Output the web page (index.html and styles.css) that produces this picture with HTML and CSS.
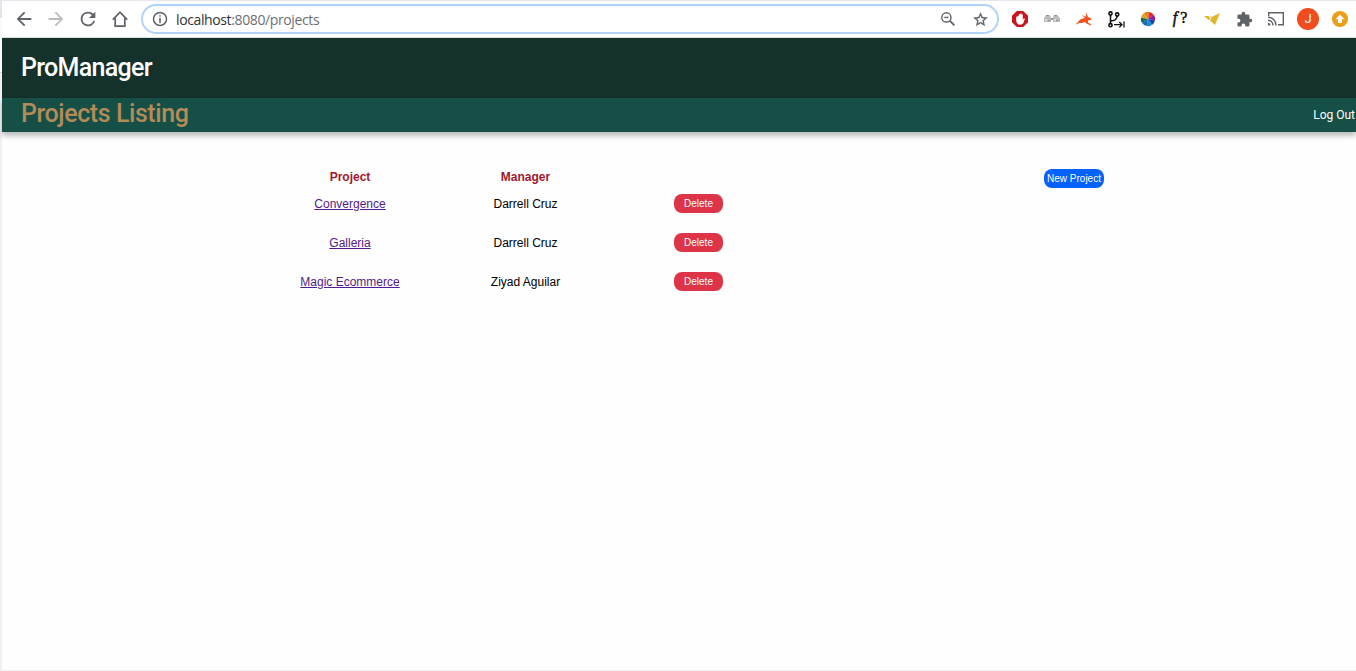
FILE: index.html
```html
<!DOCTYPE html>
<html lang="en">
<head>
<meta charset="utf-8">
<title>ProManager</title>
<link rel="stylesheet" href="styles.css">
</head>
<body>
<div class="window">
  <div class="toolbar">
    <span class="cell"><svg width="22" height="22" viewBox="0 0 24 24"><path fill="#5f6368" d="M20 11H7.83l5.59-5.59L12 4l-8 8 8 8 1.41-1.41L7.83 13H20z"/></svg></span>
    <span class="cell"><svg width="22" height="22" viewBox="0 0 24 24"><path fill="#babcbe" d="M12 4l-1.41 1.41L16.17 11H4v2h12.17l-5.58 5.59L12 20l8-8z"/></svg></span>
    <span class="cell"><svg width="22" height="22" viewBox="0 0 24 24"><path fill="#5f6368" d="M17.65 6.35A7.96 7.96 0 0 0 12 4a8 8 0 1 0 7.73 10h-2.08A6 6 0 1 1 12 6c1.66 0 3.14.69 4.22 1.78L13 11h7V4z"/></svg></span>
    <span class="cell"><svg width="16" height="18" viewBox="0 0 16 18"><path fill="none" stroke="#5f6368" stroke-width="1.700" d="M.8 9.600L8 2.200l7.200 7.400M3.200 8.200v7.900h9.600V8.200"/></svg></span>
    <div class="omnibox">
      <svg width="16" height="16" viewBox="0 0 16 16"><circle cx="8" cy="8" r="6.500" fill="none" stroke="#5f6368" stroke-width="1.500"/><path fill="#5f6368" d="M7.200 7h1.600v5H7.200zM7.200 4.200h1.600v1.600H7.200z"/></svg>
      <span class="url"><span class="host">localhost</span>:8080/projects</span>
      <span class="cell"><svg width="16" height="16" viewBox="0 0 16 16"><circle cx="6.400" cy="6.400" r="4.600" fill="none" stroke="#5f6368" stroke-width="1.400"/><path fill="none" stroke="#5f6368" stroke-width="1.400" d="M4.300 6.400h4.200"/><path stroke="#5f6368" stroke-width="1.900" d="M9.700 9.700l4.700 4.700"/></svg></span>
      <span class="cell"><svg width="17" height="17" viewBox="0 0 24 24"><path fill="#5f6368" stroke="#5f6368" stroke-width=".4" d="M22 9.240l-7.190-.62L12 2 9.190 8.630 2 9.240l5.460 4.730L5.820 21 12 17.270 18.180 21l-1.630-7.030zM12 15.400l-3.760 2.270 1-4.280-3.320-2.880 4.380-.38L12 6.100l1.710 4.040 4.380.38-3.320 2.880 1 4.280z"/></svg></span>
    </div>
    <span class="cell"><svg width="16" height="16" viewBox="0 0 16 16"><path fill="#c9151e" d="M4.800 0h6.400L16 4.800v6.400L11.200 16H4.800L0 11.200V4.800z"/><path fill="#fff" d="M4.200 6V9c0 3 1.500 4.800 4 4.800 2.200 0 3.100-1.400 3.600-3l1-2.800c.1-.7-.9-.9-1.200-.2l-.8 1.100V4c0-1-1.200-1-1.200 0V3c0-1-1.300-1-1.300 0v.8c0-1-1.300-1-1.300 0V5C7 4.200 5.600 4.200 5.600 5v1c-.2-.8-1.400-.8-1.400 0z"/></svg></span>
    <span class="cell"><svg width="16" height="10" viewBox="0 0 16 10"><path fill="#bbb" d="M2 1h3l2 2v5H0V4zM10 1h3l3 3v4H9V3z"/><path fill="#929292" d="M7 4h2v2H7zM2 1h3v1H2zM10 1h3v1h-3zM4 6h2v1H4zM12 6h2v1h-2z"/><path fill="#ddd" d="M1 5h2v2H1zM10 5h2v2h-2z"/></svg></span>
    <span class="cell"><svg width="16" height="14" viewBox="0 0 16 14"><path fill="#f4511e" d="M.5 11.500l2.200-2.200C3.800 7.300 6 6.400 9 6L5.800 3l4 1.800L10.400.3l1.400 4.500 3.500 2-.2 1.200-2.900.3-.3 2.200 3.300 2.100-.5.900-4.600-2.300-.9-1.200-3.500 1-2.900-.1-2 1.700-.8-.5z"/></svg></span>
    <span class="cell"><svg width="17" height="17" viewBox="0 0 17 17"><g fill="none" stroke="#111" stroke-width="1.600"><circle cx="2.500" cy="2.500" r="1.600"/><circle cx="9.200" cy="3.500" r="1.600"/><circle cx="2.500" cy="14.200" r="1.600"/><path d="M2.500 4v8.600M2.500 10c4.500 0 6.300-1.500 6.700-5"/><path stroke-width="1.300" d="M6 13.700h8M11.300 11l2.700 2.700-2.700 2.700M16 10.500v6"/></g></svg></span>
    <span class="cell"><svg width="16" height="16" viewBox="-8 -8 16 16"><g transform="scale(.9)"><path fill="#d9a521" d="M0 0L-7.800-1.500A8 8 0 0 1-4.500-6.600z"/><path fill="#ea7925" d="M0 0l-4.500-6.600A8 8 0 0 1 1.500-7.800z"/><path fill="#e02a34" d="M0 0l1.500-7.800A8 8 0 0 1 6.600-4.500z"/><path fill="#8a2092" d="M0 0l6.600-4.500A8 8 0 0 1 7.800 1.500z"/><path fill="#1744ae" d="M0 0l7.800 1.500A8 8 0 0 1 4.500 6.600z"/><path fill="#168bd0" d="M0 0l4.500 6.600A8 8 0 0 1-1.500 7.800z"/><path fill="#1c67c0" d="M0 0l-1.500 7.800A8 8 0 0 1-6.600 4.500z"/><path fill="#176c50" d="M0 0l-6.600 4.500A8 8 0 0 1-7.800-1.500z"/></g></svg></span>
    <span class="cell formula"><i>f</i>?</span>
    <span class="cell"><svg width="16" height="14" viewBox="0 0 16 14"><path fill="#dfb52b" d="M0 4h4.500l2.200 3L4.500 8z"/><path fill="#dfb52b" d="M5.500 3.500l2 1.500L16 1l-5 12-5-4.500 1.500-2z"/></svg></span>
    <span class="cell"><svg width="17" height="17" viewBox="0 0 24 24"><path fill="#5f6368" d="M20.500 11H19V7a2 2 0 0 0-2-2h-4V3.500a2.500 2.500 0 0 0-5 0V5H4a2 2 0 0 0-2 2v3.800h1.500a2.700 2.700 0 0 1 0 5.400H2V20a2 2 0 0 0 2 2h3.800v-1.500a2.700 2.700 0 0 1 5.400 0V22H17a2 2 0 0 0 2-2v-4h1.500a2.500 2.500 0 0 0 0-5z"/></svg></span>
    <span class="cell"><svg width="16" height="14" viewBox="0 0 16 14"><path fill="none" stroke="#5f6368" stroke-width="1.400" d="M.7 4V.7h14.600v12.100H10M0 5.200c4.500 0 8 3.600 8 8.200M0 8.200c3 0 5 2.200 5 5.200"/><path fill="#5f6368" d="M0 10.700c1.500 0 2.500 1.200 2.500 2.700H0z"/></svg></span>
    <span class="cell"><span class="avatar">J</span></span>
    <span class="cell"><svg width="16" height="16" viewBox="0 0 16 16"><circle cx="8" cy="8" r="8" fill="#ed9d16"/><path fill="#fff" d="M8 3.500l4.500 4.700H10V12H6V8.200H3.500z"/></svg></span>
  </div>
  <div class="brand">ProManager</div>
  <div class="subhead">
    <h1 class="heading">Projects Listing</h1>
    <a class="logout">Log Out</a>
  </div>
  <main class="content">
    <table class="projects">
      <thead><tr><th>Project</th><th>Manager</th><th></th></tr></thead>
      <tbody>
        <tr><td><a class="link">Convergence</a></td><td>Darrell Cruz</td><td><button class="btn delete">Delete</button></td></tr>
        <tr><td><a class="link">Galleria</a></td><td>Darrell Cruz</td><td><button class="btn delete">Delete</button></td></tr>
        <tr><td><a class="link">Magic Ecommerce</a></td><td>Ziyad Aguilar</td><td><button class="btn delete">Delete</button></td></tr>
      </tbody>
    </table>
    <button class="btn create">New Project</button>
  </main>
</div>
</body>
</html>
```
FILE: styles.css
```css
* { box-sizing: border-box; }
body {
  margin: 0;
  height: 671px;
  overflow: hidden;
  background: linear-gradient(#e4e4ec 0 18px, #fafafa 18px 72px, #d8d8d8 72px 73px, #f0f0f0 73px);
  font-family: "Liberation Sans", Arial, sans-serif;
}
.window {
  height: 671px;
  margin-left: 2px;
  background: #fefefe;
  border-bottom: 1px solid #efefef;
}
.toolbar {
  display: flex;
  align-items: center;
  height: 38px;
  padding-left: 6px;
  border-top: 1px solid #e6e6ee;
  border-bottom: 1px solid #dcdee0;
  background: #fff;
}
.cell {
  flex: none;
  display: flex;
  align-items: center;
  justify-content: center;
  width: 32px;
  height: 32px;
}
.cell svg { display: block; }
.omnibox {
  flex: none;
  display: flex;
  align-items: center;
  width: 858px;
  height: 30px;
  margin: 0 5px;
  padding: 0 1px 0 9px;
  border: 2px solid #b0d3f9;
  border-radius: 15px;
}
.url {
  flex: 1;
  margin-left: 8px;
  font: 14px "Open Sans", "Noto Sans", sans-serif;
  letter-spacing: -.38px;
  color: #6b6f74;
}
.host { color: #303236; }
.formula {
  padding-bottom: 2px;
  font: 16px "Liberation Serif", serif;
  color: #111;
  -webkit-text-stroke: .5px #111;
}
.formula i { margin-right: 3px; }
.avatar {
  width: 22px;
  height: 22px;
  border-radius: 50%;
  background: #f04c1e;
  color: #fff;
  font: 13px/22px Roboto, sans-serif;
  text-align: center;
}
.brand {
  height: 60px;
  padding-left: 19px;
  background: #15312c;
  color: #fff;
  font: 500 25px/59px Roboto, sans-serif;
  letter-spacing: -.7px;
}
.subhead {
  display: flex;
  justify-content: space-between;
  height: 34px;
  padding: 0 1px 0 19px;
  background: #154f45;
  box-shadow: 0 4px 5px rgba(0, 0, 0, .25);
}
.heading {
  margin: 0;
  color: #b38b59;
  font: 500 25px/31px Roboto, sans-serif;
  letter-spacing: -.43px;
}
.logout {
  color: #fff;
  font: 12px/34px Roboto, sans-serif;
}
.content {
  display: flex;
  align-items: flex-start;
  padding: 32px 0 0 260px;
}
.projects {
  table-layout: fixed;
  width: 523px;
  border-collapse: collapse;
  font-size: 12px;
  text-align: center;
}
.projects th {
  width: 175px;
  height: 25px;
  padding: 0;
  color: #a0182f;
}
.projects th:first-child { width: 176px; }
.projects th:last-child { width: 172px; }
.projects td {
  height: 39px;
  padding: 1px 0 10px;
}
.projects td:last-child {
  padding: 0 1px 11px 0;
}
.link {
  color: #551a8b;
  text-decoration: underline;
}
.btn {
  display: inline-block;
  height: 19px;
  padding: 0;
  border: 0;
  border-radius: 8px;
  color: #fff;
  font: 10px "Liberation Sans", Arial, sans-serif;
}
.delete {
  width: 49px;
  background: #dd3547;
}
.create {
  width: 60px;
  margin: 5px 0 0 259px;
  background: #0561fc;
  white-space: nowrap;
}
```
